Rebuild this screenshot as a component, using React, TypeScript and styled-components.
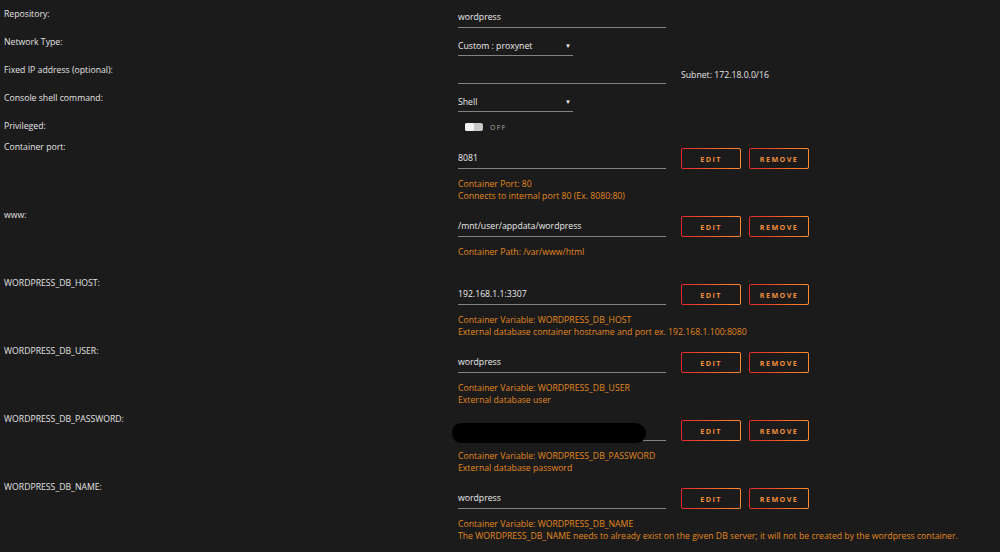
import * as React from 'react';
import styled, { createGlobalStyle } from 'styled-components';

const GlobalStyle = createGlobalStyle`
  html, body {
    margin: 0;
    padding: 0;
    background: #1c1b1b;
    color: #e4e4e4;
    font-family: 'Open Sans', 'Liberation Sans', sans-serif;
    font-size: 8.7px;
  }
`;

interface ConfigItem {
  label: string;
  value: string;
  hidden?: boolean;
  notes: string[];
}

const configs: ConfigItem[] = [
  {
    label: 'Container port:',
    value: '8081',
    notes: ['Container Port: 80', 'Connects to internal port 80 (Ex. 8080:80)'],
  },
  {
    label: 'www:',
    value: '/mnt/user/appdata/wordpress',
    notes: ['Container Path: /var/www/html'],
  },
  {
    label: 'WORDPRESS_DB_HOST:',
    value: '192.168.1.1:3307',
    notes: [
      'Container Variable: WORDPRESS_DB_HOST',
      'External database container hostname and port ex. 192.168.1.100:8080',
    ],
  },
  {
    label: 'WORDPRESS_DB_USER:',
    value: 'wordpress',
    notes: ['Container Variable: WORDPRESS_DB_USER', 'External database user'],
  },
  {
    label: 'WORDPRESS_DB_PASSWORD:',
    value: '',
    hidden: true,
    notes: ['Container Variable: WORDPRESS_DB_PASSWORD', 'External database password'],
  },
  {
    label: 'WORDPRESS_DB_NAME:',
    value: 'wordpress',
    notes: [
      'Container Variable: WORDPRESS_DB_NAME',
      'The WORDPRESS_DB_NAME needs to already exist on the given DB server; it will not be created by the wordpress container.',
    ],
  },
];

const App = () => {
  return (
    <Page>
      <GlobalStyle />
      <Row>
        <Label>Repository:</Label>
        <Field>
          <TextInput>wordpress</TextInput>
        </Field>
      </Row>
      <Row>
        <Label>Network Type:</Label>
        <Field>
          <Select>
            <span>Custom : proxynet</span>
            <Arrow>▼</Arrow>
          </Select>
        </Field>
      </Row>
      <Row>
        <Label>Fixed IP address (optional):</Label>
        <Field>
          <TextInput />
          <Subnet>Subnet: 172.18.0.0/16</Subnet>
        </Field>
      </Row>
      <Row>
        <Label>Console shell command:</Label>
        <Field>
          <Select>
            <span>Shell</span>
            <Arrow>▼</Arrow>
          </Select>
        </Field>
      </Row>
      <Row $short>
        <Label>Privileged:</Label>
        <Field>
          <Switch>
            <Track>
              <Thumb />
            </Track>
            <SwitchText>OFF</SwitchText>
          </Switch>
        </Field>
      </Row>

      {configs.map((item) => (
        <ConfigRow key={item.label}>
          <Label>{item.label}</Label>
          <ConfigBody>
            <Field $withButtons>
              <TextInput>
                {item.value}
                {item.hidden && <Redacted />}
              </TextInput>
              <Buttons>
                <OutlineButton>EDIT</OutlineButton>
                <OutlineButton>REMOVE</OutlineButton>
              </Buttons>
            </Field>
            <Notes>
              {item.notes.map((n) => (
                <Note key={n}>{n}</Note>
              ))}
            </Notes>
          </ConfigBody>
        </ConfigRow>
      ))}
    </Page>
  );
};

export default App;

const Page = styled.div`
  width: 1000px;
  height: 552px;
  overflow: hidden;
  box-sizing: border-box;
  padding: 8px 0 0 4px;
`;

const Row = styled.div<{ $short?: boolean }>`
  display: grid;
  grid-template-columns: 454px 1fr;
  height: ${(p) => (p.$short ? '21px' : '28px')};
`;

const ConfigRow = styled.div`
  display: grid;
  grid-template-columns: 454px 1fr;
  height: 68px;
`;

const Label = styled.div`
  line-height: 12px;
  color: #e2e2e2;
  white-space: nowrap;
`;

const Field = styled.div<{ $withButtons?: boolean }>`
  display: flex;
  align-items: ${(p) => (p.$withButtons ? 'flex-end' : 'center')};
  gap: 15px;
  height: ${(p) => (p.$withButtons ? '21px' : '20px')};
`;

const ConfigBody = styled.div`
  padding-top: 7px;
  display: flex;
  flex-direction: column;
`;

const TextInput = styled.div`
  position: relative;
  box-sizing: border-box;
  width: 208px;
  height: 20px;
  line-height: 19px;
  border-bottom: 1px solid #828282;
  color: #ececec;
  white-space: nowrap;
`;

const Redacted = styled.span`
  position: absolute;
  left: -6px;
  top: 2px;
  width: 194px;
  height: 20px;
  background: #000;
  border-radius: 10px 12px 10px 9px / 9px 11px 10px 11px;
`;

const Select = styled.div`
  box-sizing: border-box;
  width: 115px;
  height: 20px;
  display: flex;
  align-items: center;
  justify-content: space-between;
  border-bottom: 1px solid #828282;
  color: #ececec;
`;

const Arrow = styled.span`
  font-size: 6px;
  margin-right: 2px;
  color: #f0f0f0;
`;

const Subnet = styled.span`
  margin-top: 2px;
  color: #e6e6e6;
`;

const Switch = styled.div`
  display: flex;
  align-items: center;
  gap: 7px;
  padding-left: 7px;
  margin-top: -6px;
`;

const Track = styled.div`
  width: 18px;
  height: 8px;
  border-radius: 2px;
  background: #c8c8c8;
  display: flex;
`;

const Thumb = styled.div`
  width: 9px;
  height: 8px;
  border-radius: 2px;
  background: #f4f4f4;
`;

const SwitchText = styled.span`
  font-size: 7px;
  letter-spacing: 1.2px;
  color: #a8a8a8;
`;

const Buttons = styled.div`
  display: flex;
  gap: 8px;
`;

const OutlineButton = styled.button`
  box-sizing: border-box;
  width: 60px;
  height: 21px;
  padding: 0;
  border: 1px solid transparent;
  border-radius: 2px;
  background:
    linear-gradient(#1c1b1b, #1c1b1b) padding-box,
    linear-gradient(90deg, #e22828 0%, #ff8c2f 100%) border-box;
  color: #ee8e3c;
  font-family: 'Open Sans', 'Liberation Sans', sans-serif;
  font-size: 7.2px;
  font-weight: 700;
  letter-spacing: 1.4px;
`;

const Notes = styled.div`
  margin-top: 9px;
  display: flex;
  flex-direction: column;
`;

const Note = styled.div`
  line-height: 12px;
  color: #e0881f;
  white-space: nowrap;
`;
